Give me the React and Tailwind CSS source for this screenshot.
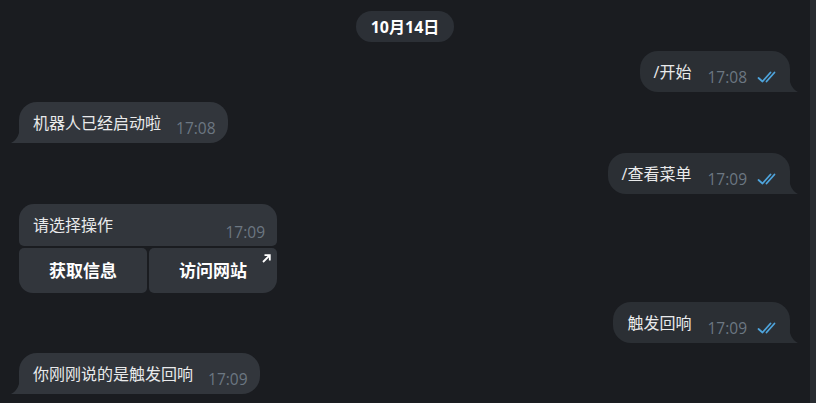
import React from 'react';

const font = { fontFamily: '"Open Sans", "Noto Sans CJK SC", sans-serif' };

function Checks() {
  return (
    <svg width="23" height="12" viewBox="0 0 23 12" fill="none" stroke="#4ea4dc" strokeWidth="1.8" strokeLinecap="round" strokeLinejoin="round">
      <path d="M1.5 7 L5.5 10.5 L13.5 1.5" />
      <path d="M9.5 10.5 L17.5 1.5" />
    </svg>
  );
}

function TailRight() {
  return (
    <svg className="absolute bottom-0 -right-[8px]" width="9" height="18" viewBox="0 0 9 18">
      <path d="M0 0 C0 9 3 15 9 18 H0 Z" fill="#2b2f34" />
    </svg>
  );
}

function TailLeft() {
  return (
    <svg className="absolute bottom-0 -left-[8px]" width="9" height="18" viewBox="0 0 9 18">
      <path d="M9 0 C9 9 6 15 0 18 H9 Z" fill="#32363c" />
    </svg>
  );
}

function Outgoing({ text, time }) {
  return (
    <div className="flex justify-end pr-[20px]">
      <div className="relative flex items-center h-[41px] pl-[14px] pr-[10px] bg-[#2b2f34] rounded-[18px] rounded-br-none">
        <span className="text-[16px] leading-5 text-[#e9eaeb]">{text}</span>
        <span className="flex items-center pt-[10px] ml-[16px] gap-[10px]">
          <span className="text-[15.5px] leading-5 text-[#6c7782]">{time}</span>
          <Checks />
        </span>
        <TailRight />
      </div>
    </div>
  );
}

function Incoming({ text, time }) {
  return (
    <div className="flex justify-start pl-[19px]">
      <div className="relative flex items-center h-[41px] pl-[14px] pr-[12px] bg-[#32363c] rounded-[18px] rounded-bl-none">
        <span className="text-[16px] leading-5 text-[#e9eaeb]">{text}</span>
        <span className="pt-[10px] ml-[15px] text-[15.5px] leading-5 text-[#6c7782]">{time}</span>
        <TailLeft />
      </div>
    </div>
  );
}

function ArrowIcon() {
  return (
    <svg className="absolute top-[6px] right-[6px]" width="9" height="9" viewBox="0 0 9 9" fill="none" stroke="#ffffff" strokeWidth="1.8">
      <path d="M1 8 L7.5 1.5" />
      <path d="M2.5 1.2 H7.8 V6.5" />
    </svg>
  );
}

export default function App() {
  return (
    <div className="flex w-[816px] h-[403px] overflow-hidden bg-[#1a1c20]" style={font}>
      <div className="flex-1 flex flex-col pt-[11px]">
        <div className="self-center flex items-center h-[31px] px-[15px] rounded-full bg-[#2c3036] text-[16px] font-bold text-white">
          10月14日
        </div>

        <div className="mt-[9px]">
          <Outgoing text="/开始" time="17:08" />
        </div>
        <div className="mt-[10px]">
          <Incoming text="机器人已经启动啦" time="17:08" />
        </div>
        <div className="mt-[10px]">
          <Outgoing text="/查看菜单" time="17:09" />
        </div>

        <div className="mt-[10px] pl-[19px] flex flex-col w-[277px]">
          <div className="flex justify-between h-[42px] pl-[14px] pr-[12px] pt-[11px] bg-[#32363c] rounded-t-[15px] rounded-b-[5px]">
            <span className="text-[16px] leading-5 text-[#e9eaeb]">请选择操作</span>
            <span className="pt-[7px] text-[15.5px] leading-5 text-[#6c7782]">17:09</span>
          </div>
          <div className="flex gap-[2px] mt-[2px]">
            <div className="relative flex-1 h-[45px] flex items-center justify-center bg-[#32363c] rounded-t-[5px] rounded-bl-[14px] rounded-br-[5px] text-[17px] font-bold text-white">
              获取信息
            </div>
            <div className="relative flex-1 h-[45px] flex items-center justify-center bg-[#32363c] rounded-t-[5px] rounded-br-[14px] rounded-bl-[5px] text-[17px] font-bold text-white">
              访问网站
              <ArrowIcon />
            </div>
          </div>
        </div>

        <div className="mt-[9px]">
          <Outgoing text="触发回响" time="17:09" />
        </div>
        <div className="mt-[10px]">
          <Incoming text="你刚刚说的是触发回响" time="17:09" />
        </div>
      </div>
      <div className="w-[6px] h-full bg-[#292c31]" />
    </div>
  );
}
